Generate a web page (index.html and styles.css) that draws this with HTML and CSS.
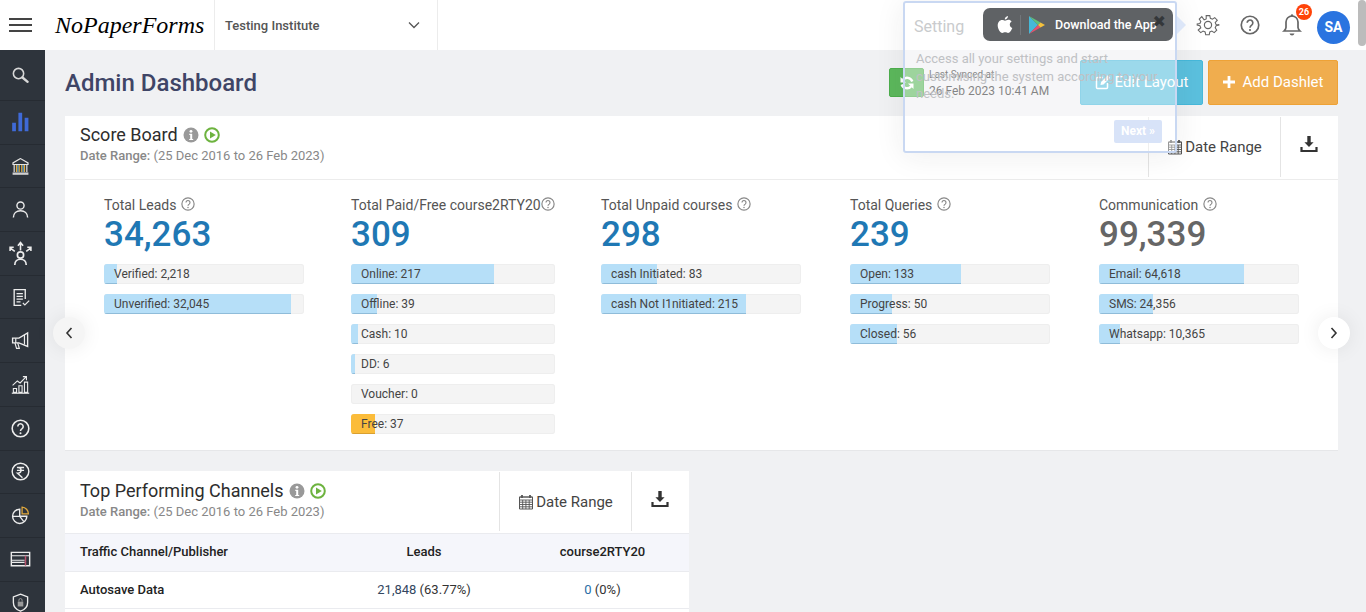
FILE: index.html
```html
<!DOCTYPE html>
<html lang="en">
<head>
    <meta charset="UTF-8">
    <meta name="viewport" content="width=device-width, initial-scale=1.0">
    <title>Admin Dashboard</title>
    <link rel="stylesheet" href="styles.css">
</head>
<body>

<svg class="sprites" width="0" height="0">
    <symbol id="i-help" viewBox="0 0 24 24">
        <circle cx="12" cy="12" r="10.5" fill="none" stroke="currentColor" stroke-width="2"/>
        <path d="M8.6 9.4a3.4 3.4 0 1 1 5.4 2.8c-1.3.9-2 1.5-2 3" fill="none" stroke="currentColor" stroke-width="2"/>
        <circle cx="12" cy="18" r="1.3" fill="currentColor"/>
    </symbol>
    <symbol id="i-info" viewBox="0 0 16 16">
        <circle cx="8" cy="8" r="7.5" fill="#999"/>
        <circle cx="8" cy="4.3" r="1.4" fill="#fff"/>
        <path d="M6.3 6.700h2.900v5.200h1v1.200H6.200v-1.200h1v-4h-.9z" fill="#fff"/>
    </symbol>
    <symbol id="i-play" viewBox="0 0 16 16">
        <circle cx="8" cy="8" r="6.800" fill="none" stroke="#6db33f" stroke-width="2"/>
        <path d="M6 4.400L11.800 8 6 11.600z" fill="#6db33f"/>
    </symbol>
    <symbol id="i-calendar" viewBox="0 0 16 16">
        <path d="M1.500 3h13v12h-13z" fill="none" stroke="#555" stroke-width="1"/>
        <path d="M1.500 3h13v3h-13zM1.500 8.200h13M1.500 10.500h13M1.500 12.800h13M4.700 6v9M7.900 6v9M11.200 6v9" fill="none" stroke="#555" stroke-width=".9"/>
        <path d="M4 1v3M12 1v3" stroke="#555" stroke-width="1.800"/>
    </symbol>
    <symbol id="i-download" viewBox="0 0 18 18">
        <path d="M7.300 1h3.400v6.200h2.900L9 12 4.400 7.200h2.900z" fill="#333"/>
        <path d="M1.500 12v4h15v-4" fill="none" stroke="#333" stroke-width="2.200"/>
    </symbol>
</svg>

<header class="topbar">
    <a class="burger"><span></span><span></span><span></span></a>
    <div class="logo">NoPaperForms</div>
    <div class="institute">
        <span>Testing Institute</span>
        <svg width="12" height="8" viewBox="0 0 12 8"><path d="M1 1.500l5 5 5-5" fill="none" stroke="#555" stroke-width="1.300"/></svg>
    </div>
    <div class="top-icons">
        <svg class="top-icon" viewBox="0 0 24 24"><path d="M10 2h4l.6 3 2.300 1 2.600-1.700 2.800 2.800L20 9.700l1 2.300 3 .6v-1.200 1.200l-3 .6-1 2.300 1.700 2.600-2.800 2.800-2.600-1.700-2.300 1-.6 3h-4l-.6-3-2.300-1-2.600 1.700-2.800-2.800L4 15.500 3 13.200 0 12.600v-1.200l3-.6 1-2.300-1.700-2.600 2.800-2.800L7.700 6.800 10 5.800z" fill="none" stroke="#666" stroke-width="1.200" transform="translate(1.200 .8) scale(.9)"/><circle cx="12" cy="12" r="3.600" fill="none" stroke="#666" stroke-width="1.200"/></svg>
        <svg class="top-icon help"><use href="#i-help"/></svg>
        <div class="bell">
            <svg class="top-icon" viewBox="0 0 24 24"><path d="M12 3a6 6 0 0 0-6 6v5.500c0 1.500-1 2.500-2 3.500h16c-1-1-2-2-2-3.500V9a6 6 0 0 0-6-6z" fill="none" stroke="#666" stroke-width="1.700"/><path d="M9.500 20.500a2.600 2.600 0 0 0 5 0z" fill="#666"/><circle cx="12" cy="2.500" r="1.200" fill="#666"/></svg>
            <span class="badge">26</span>
        </div>
        <div class="avatar">SA</div>
    </div>
</header>

<div class="layout">
    <nav class="sidebar">
        <a class="side-item first"><svg viewBox="0 0 24 24"><circle cx="9.500" cy="9.500" r="6.500" fill="none" stroke="#d8d8d8" stroke-width="2"/><path d="M14.500 14.500l6.500 5.500" stroke="#d8d8d8" stroke-width="3" stroke-linecap="round"/></svg></a>
        <a class="side-item"><svg class="lg" viewBox="0 0 24 24"><path d="M2 13h4.500v10H2zM9.500 1h4.500v22H9.500zM17 7h4.500v16H17z" fill="#3f6ad8"/></svg></a>
        <a class="side-item"><svg viewBox="0 0 24 24"><path d="M12 2L2.500 7.500v2h19v-2z" fill="none" stroke="#e4e4e4" stroke-width="1.500"/><path d="M4 19V10M20 19V10" stroke="#e4e4e4" stroke-width="1.500"/><path d="M7 10v9M10.300 10v9M13.600 10v9M17 10v9" stroke="#e2a93c" stroke-width="1.600"/><path d="M8.700 10v9M15.300 10v9" stroke="#58a6dc" stroke-width="1.400"/><path d="M2 19.500h20v3H2z" fill="#d0d0d0"/></svg></a>
        <a class="side-item"><svg viewBox="0 0 24 24"><circle cx="12" cy="7" r="4.500" fill="none" stroke="#ececec" stroke-width="1.800"/><path d="M3 22c0-5.500 4-8.500 9-8.500s9 3 9 8.500" fill="none" stroke="#ececec" stroke-width="1.800"/></svg></a>
        <a class="side-item"><svg class="xl" viewBox="0 0 24 24"><circle cx="12" cy="13.500" r="3" fill="none" stroke="#ececec" stroke-width="1.600"/><path d="M6.500 23c0-3.500 2.500-5.500 5.500-5.500s5.500 2 5.500 5.500" fill="none" stroke="#ececec" stroke-width="1.600"/><path d="M12 9V2.500M9.500 4.500L12 1.500l2.500 3M6.500 10L2 6.500M2 9.500V6h3.500M17.500 10L22 6.500M22 9.500V6h-3.500" fill="none" stroke="#ececec" stroke-width="1.500"/></svg></a>
        <a class="side-item"><svg viewBox="0 0 24 24"><path d="M18 14V2H4v20h9" fill="none" stroke="#ececec" stroke-width="1.700"/><path d="M7 7h8M7 10.500h8M7 14h8M7 17.500h5" stroke="#ececec" stroke-width="1.500"/><path d="M15 19l2.500 2.500L23 16" fill="none" stroke="#ececec" stroke-width="1.500"/></svg></a>
        <a class="side-item"><svg viewBox="0 0 24 24"><path d="M2 9h8l11-6.500v17L10 15H2z" fill="none" stroke="#ececec" stroke-width="1.700"/><path d="M5 15l2 7h3.500l-2-7M6 9v6M17 5v12" fill="none" stroke="#ececec" stroke-width="1.500"/></svg></a>
        <a class="side-item"><svg viewBox="0 0 24 24"><path d="M1 23h22" stroke="#ececec" stroke-width="1.500"/><path d="M3 17h4v5H3zM10 13.500h4V22h-4zM17 9h4v13h-4z" fill="none" stroke="#ececec" stroke-width="1.400"/><path d="M2 13L8 7.500l3.500 2.500L19 2.500M15 2h4.500v4.500" fill="none" stroke="#ececec" stroke-width="1.400"/></svg></a>
        <a class="side-item"><svg viewBox="0 0 24 24"><use href="#i-help" class="side-use"/></svg></a>
        <a class="side-item"><svg viewBox="0 0 24 24"><circle cx="12" cy="12" r="10.500" fill="none" stroke="#ececec" stroke-width="1.800"/><path d="M7.500 7h9M7.500 10.500h9M9 7c5 0 5 7 0 7H8l6.500 6" fill="none" stroke="#ececec" stroke-width="1.700"/></svg></a>
        <a class="side-item"><svg viewBox="0 0 24 24"><path d="M11 4a9 9 0 1 0 9 9h-9z" fill="none" stroke="#ececec" stroke-width="1.800"/><path d="M14 1.500a8.500 8.500 0 0 1 8 8.500h-8z" fill="none" stroke="#e2a93c" stroke-width="1.600"/><path d="M2 13h9l5 6.500" fill="none" stroke="#ececec" stroke-width="1.600"/></svg></a>
        <a class="side-item"><svg class="lg" viewBox="0 0 24 24"><path d="M1 4h22v16H1z" fill="none" stroke="#ececec" stroke-width="1.700"/><path d="M1 8h22M1 13.500h16M1 16h16" stroke="#ececec" stroke-width="1.300"/><path d="M18 8v12" stroke="#b7526c" stroke-width="1.800"/></svg></a>
        <a class="side-item"><svg viewBox="0 0 24 24"><path d="M12 1.500l9 3.500v7c0 5-3.500 9-9 11-5.500-2-9-6-9-11V5z" fill="none" stroke="#ececec" stroke-width="1.700"/><path d="M8.500 11h7v6h-7z" fill="#9a9a9a"/><path d="M10 11V9a2 2 0 0 1 4 0v2" fill="none" stroke="#9a9a9a" stroke-width="1.200"/></svg></a>
    </nav>

    <main class="content">
        <div class="page-head">
            <h1>Admin Dashboard</h1>
            <div class="head-actions">
                <div class="sync-btn"><svg width="16" height="16" viewBox="0 0 16 16"><path d="M13.300 6.500A5.500 5.500 0 0 0 3.800 4.800M2.700 9.500A5.500 5.500 0 0 0 12.200 11.200" fill="none" stroke="#fff" stroke-width="2.400"/><path d="M1.500 2v5.500H7zM14.500 14V8.500H9z" fill="#fff"/></svg></div>
                <div class="sync-text">
                    <span class="sync-label">Last Synced at</span>
                    <span class="sync-date">26 Feb 2023 10:41 AM</span>
                </div>
                <button class="btn btn-edit"><svg width="16" height="16" viewBox="0 0 16 16"><path d="M12.500 9v4.500a1 1 0 0 1-1 1h-9a1 1 0 0 1-1-1v-9a1 1 0 0 1 1-1H8" fill="none" stroke="#fff" stroke-width="1.500"/><path d="M5.500 11l.6-3L12.800 1.300l2.400 2.400L8.500 10.400z" fill="#fff"/></svg>Edit Layout</button>
                <button class="btn btn-add"><svg width="12" height="12" viewBox="0 0 13 13"><path d="M5 0h3v5h5v3H8v5H5V8H0V5h5z" fill="#fff"/></svg>Add Dashlet</button>
            </div>
        </div>

        <section class="card">
            <div class="card-head">
                <div class="card-title">
                    <h2>Score Board <svg class="ico"><use href="#i-info"/></svg> <svg class="ico"><use href="#i-play"/></svg></h2>
                    <p class="range"><b>Date Range:</b> (25 Dec 2016 to 26 Feb 2023)</p>
                </div>
                <div class="head-cell date-cell"><svg class="cal"><use href="#i-calendar"/></svg>Date Range</div>
                <div class="head-cell dl-cell"><svg class="dl"><use href="#i-download"/></svg></div>
            </div>

            <div class="stats">
                <div class="stat">
                    <div class="stat-name">Total Leads <svg class="q"><use href="#i-help"/></svg></div>
                    <div class="stat-num">34,263</div>
                    <div class="bar"><i style="width:6.5%"></i><span>Verified: 2,218</span></div>
                    <div class="bar"><i style="width:93.5%"></i><span>Unverified: 32,045</span></div>
                </div>
                <div class="stat wide">
                    <div class="stat-name tight">Total Paid/Free course2RTY20<svg class="q"><use href="#i-help"/></svg></div>
                    <div class="stat-num">309</div>
                    <div class="bar"><i style="width:70%"></i><span>Online: 217</span></div>
                    <div class="bar"><i style="width:12.6%"></i><span>Offline: 39</span></div>
                    <div class="bar"><i style="width:3.2%"></i><span>Cash: 10</span></div>
                    <div class="bar"><i style="width:1.9%"></i><span>DD: 6</span></div>
                    <div class="bar"><i style="width:0"></i><span>Voucher: 0</span></div>
                    <div class="bar"><i class="free" style="width:11.9%"></i><span>Free: 37</span></div>
                </div>
                <div class="stat">
                    <div class="stat-name">Total Unpaid courses <svg class="q"><use href="#i-help"/></svg></div>
                    <div class="stat-num">298</div>
                    <div class="bar"><i style="width:27.9%"></i><span>cash Initiated: 83</span></div>
                    <div class="bar"><i style="width:72.5%"></i><span>cash Not I1nitiated: 215</span></div>
                </div>
                <div class="stat">
                    <div class="stat-name">Total Queries <svg class="q"><use href="#i-help"/></svg></div>
                    <div class="stat-num">239</div>
                    <div class="bar"><i style="width:55.6%"></i><span>Open: 133</span></div>
                    <div class="bar"><i style="width:20.9%"></i><span>Progress: 50</span></div>
                    <div class="bar"><i style="width:23.4%"></i><span>Closed: 56</span></div>
                </div>
                <div class="stat">
                    <div class="stat-name">Communication <svg class="q"><use href="#i-help"/></svg></div>
                    <div class="stat-num grey">99,339</div>
                    <div class="bar"><i style="width:72.5%"></i><span>Email: 64,618</span></div>
                    <div class="bar"><i style="width:27%"></i><span>SMS: 24,356</span></div>
                    <div class="bar"><i style="width:10.5%"></i><span>Whatsapp: 10,365</span></div>
                </div>
            </div>
            <a class="arrow arrow-left"><svg width="8" height="12" viewBox="0 0 8 12"><path d="M6.500 1L2 6l4.500 5" fill="none" stroke="#333" stroke-width="1.600"/></svg></a>
            <a class="arrow arrow-right"><svg width="8" height="12" viewBox="0 0 8 12"><path d="M1.500 1L6 6l-4.500 5" fill="none" stroke="#333" stroke-width="1.600"/></svg></a>
        </section>

        <section class="card channels">
            <div class="card-head">
                <div class="card-title">
                    <h2>Top Performing Channels <svg class="ico"><use href="#i-info"/></svg> <svg class="ico"><use href="#i-play"/></svg></h2>
                    <p class="range"><b>Date Range:</b> (25 Dec 2016 to 26 Feb 2023)</p>
                </div>
                <div class="head-cell date-cell"><svg class="cal"><use href="#i-calendar"/></svg>Date Range</div>
                <div class="head-cell dl-cell"><svg class="dl"><use href="#i-download"/></svg></div>
            </div>
            <table>
                <tr>
                    <th>Traffic Channel/Publisher</th>
                    <th>Leads</th>
                    <th>course2RTY20</th>
                </tr>
                <tr>
                    <td>Autosave Data</td>
                    <td><a class="num">21,848</a> (63.77%)</td>
                    <td><a class="num zero">0</a> (0%)</td>
                </tr>
                <tr>
                    <td>&nbsp;</td>
                    <td></td>
                    <td></td>
                </tr>
            </table>
        </section>
    </main>
</div>

<div class="tour">
    <h3>Setting</h3>
    <p>Access all your settings and start customising the system according to your needs.</p>
    <a class="tour-next">Next »</a>
</div>
<div class="app-pill">
    <svg class="apple" width="16" height="18" viewBox="0 0 16 18"><path d="M11 0c.1 1.500-1.300 3.600-3.200 3.500C7.600 2 9.200.2 11 0zM8 4.700c.8 0 1.900-.9 3.400-.9 1.200 0 2.400.6 3.200 1.700-2.700 1.600-2.200 5.400.7 6.500-.7 1.900-2.500 5-4.200 5-1.100 0-1.600-.7-2.900-.7s-1.900.7-2.900.7C3.200 17 .7 12.800.7 9.500c0-3.400 2.200-5.500 4.300-5.500 1.300 0 2.300.7 3 .7z" fill="#fff"/></svg>
    <span class="pill-sep"></span>
    <svg class="gplay" width="16" height="18" viewBox="0 0 16 18"><path d="M0 0l9 9-9 9z" fill="#45b8d8"/><path d="M0 0l11.500 6.500L9 9z" fill="#5fc07a"/><path d="M0 18l11.500-6.500L9 9z" fill="#e8506b"/><path d="M11.500 6.500L16 9l-4.500 2.500L9 9z" fill="#f5c13c"/></svg>
    <span class="pill-text">Download the App</span>
    <span class="tour-close">✖</span>
</div>
<div class="scroll-thumb"></div>

</body>
</html>
```

FILE: styles.css
```css
* {
    box-sizing: border-box;
}

html, body {
    height: 100%;
    margin: 0;
    overflow: hidden;
}

body {
    font-family: Roboto, Arial, sans-serif;
    background-color: #f0f1f3;
    color: #333;
}

.sprites {
    display: block;
}

/* top bar */
.topbar {
    display: flex;
    align-items: stretch;
    height: 50px;
    background-color: #fff;
}

.burger {
    display: flex;
    flex-direction: column;
    justify-content: center;
    gap: 4px;
    width: 55px;
    padding-left: 9px;
}

.burger span {
    display: block;
    width: 23px;
    height: 2px;
    background-color: #444;
}

.logo {
    width: 159px;
    font-family: "Liberation Serif", serif;
    font-style: italic;
    font-size: 24px;
    line-height: 50px;
    color: #000;
    white-space: nowrap;
}

.institute {
    display: flex;
    align-items: center;
    justify-content: space-between;
    width: 224px;
    padding: 0 17px 0 10px;
    border-left: 1px solid #ececec;
    border-right: 1px solid #ececec;
    font-size: 13px;
    font-weight: 500;
    color: #555;
}

.top-icons {
    display: flex;
    align-items: center;
    margin-left: auto;
    padding-right: 16px;
    gap: 18px;
}

.top-icon {
    display: block;
    width: 24px;
    height: 24px;
}

.help {
    width: 20px;
    height: 20px;
    margin: 0 2px;
    color: #666;
}

.bell {
    position: relative;
    margin-right: -5px;
}

.badge {
    position: absolute;
    top: -9px;
    right: -8px;
    width: 16px;
    height: 16px;
    border-radius: 50%;
    background-color: #ff4308;
    color: #fff;
    font-size: 9px;
    font-weight: 700;
    line-height: 16px;
    text-align: center;
}

.avatar {
    width: 33px;
    height: 33px;
    margin-top: 4px;
    border-radius: 50%;
    background-color: #2a74e0;
    color: #fff;
    font-size: 14px;
    font-weight: 700;
    line-height: 33px;
    text-align: center;
}

/* sidebar */
.layout {
    display: flex;
    height: 562px;
}

.sidebar {
    flex: 0 0 45px;
    background-color: #2e343c;
}

.side-item {
    display: flex;
    align-items: center;
    justify-content: center;
    height: 43.7px;
    padding-right: 4px;
    border-bottom: 1px solid #262b32;
}

.side-item.first {
    height: 51px;
}

.side-item svg {
    width: 19px;
    height: 19px;
}

.side-item svg.lg {
    width: 21px;
    height: 20px;
}

.side-item svg.xl {
    width: 25px;
    height: 25px;
}

.side-use {
    color: #ececec;
}

/* main area */
.content {
    flex: 1;
    padding: 0 28px 0 20px;
}

.page-head {
    display: flex;
    justify-content: space-between;
    height: 66px;
}

.page-head h1 {
    margin: 0;
    font-size: 24px;
    font-weight: 500;
    line-height: 66px;
    color: #3f4566;
}

.head-actions {
    display: flex;
    align-items: center;
    height: 45px;
    margin-top: 10px;
}

.sync-btn {
    display: flex;
    align-items: center;
    justify-content: center;
    width: 35px;
    height: 29px;
    border: 1px solid #4cae4c;
    border-radius: 2px;
    background-color: #5cb85c;
}

.sync-text {
    display: flex;
    flex-direction: column;
    width: 151px;
    margin: 3px 0 0 5px;
    color: #333;
}

.sync-label {
    font-size: 10px;
    line-height: 14px;
}

.sync-date {
    font-size: 12px;
    line-height: 18px;
}

.btn {
    display: flex;
    align-items: center;
    justify-content: center;
    gap: 4px;
    height: 45px;
    padding: 0 0 2px;
    border-radius: 2px;
    color: #fff;
    font-family: inherit;
    font-size: 15px;
}

.btn-edit {
    width: 123px;
    margin-right: 5px;
    border: 1px solid #46b8da;
    background-color: #5bc0de;
}

.btn-add {
    gap: 8px;
    width: 130px;
    border: 1px solid #eea236;
    background-color: #f0ad4e;
}

/* cards */
.card {
    position: relative;
    background-color: #fff;
    border-bottom: 1px solid #e6e7e9;
}

.card-head {
    display: flex;
    height: 64px;
    border-bottom: 1px solid #ececec;
}

.card-title {
    flex: 1;
    padding: 9px 0 0 15px;
}

.card-title h2 {
    display: flex;
    align-items: center;
    gap: 5px;
    margin: 0;
    font-size: 18px;
    font-weight: 400;
    line-height: 20px;
    color: #2d2d2d;
}

.ico {
    width: 16px;
    height: 16px;
}

.range {
    margin: 4px 0 0;
    font-size: 13px;
    line-height: 14px;
    color: #888;
}

.range b {
    font-weight: 500;
}

.head-cell {
    display: flex;
    align-items: center;
    justify-content: center;
    margin: 1px 0 2px;
    border-left: 1px solid #e4e4e4;
    font-size: 15px;
    color: #444;
}

.date-cell {
    width: 132px;
}

.dl-cell {
    width: 58px;
    padding-right: 1px;
}

.cal {
    width: 16px;
    height: 16px;
    margin-right: 2px;
}

.dl {
    width: 18px;
    height: 18px;
    margin-bottom: 6px;
}

/* score board columns */
.stats {
    display: grid;
    grid-template-columns: 247px 250px 249px 249px 200px;
    height: 270px;
    padding: 16px 0 0 39px;
}

.stat {
    width: 200px;
}

.stat.wide {
    width: 204px;
}

.stat-name {
    display: flex;
    align-items: center;
    gap: 5px;
    font-size: 14px;
    line-height: 18px;
    color: #555;
    white-space: nowrap;
}

.stat-name.tight {
    gap: 0;
}

.q {
    width: 14px;
    height: 14px;
    color: #888;
    margin-top: -2px;
}

.stat-num {
    margin-bottom: 8px;
    font-size: 35px;
    font-weight: 500;
    line-height: 42px;
    color: #1f78b4;
}

.stat-num.grey {
    color: #666;
}

.bar {
    display: grid;
    height: 20px;
    margin-bottom: 10px;
    border-radius: 3px;
    background-color: #f4f4f4;
    overflow: hidden;
    box-shadow: inset 0 0 0 1px #eeeeee;
}

.bar i, .bar span {
    grid-area: 1 / 1;
}

.bar i {
    background-color: #b6dff8;
    border-bottom: 1px solid #8fbcd9;
}

.bar i.free {
    background-color: #fbbc3a;
    border-bottom-color: #d9a030;
}

.bar span {
    padding-left: 10px;
    font-size: 12px;
    line-height: 20px;
    color: #444;
    white-space: nowrap;
}

/* carousel arrows sit over the card edge */
.arrow {
    position: absolute;
    top: 201px;
    display: flex;
    align-items: center;
    justify-content: center;
    width: 32px;
    height: 32px;
    border-radius: 50%;
    box-shadow: 0 0 20px rgba(0, 0, 0, .08);
}

.arrow-left {
    left: -12px;
    background-color: #f5f5f5;
}

.arrow-right {
    right: -12px;
    background-color: #fff;
}

/* channels table */
.channels {
    width: 624px;
    margin-top: 20px;
    border-bottom: 0;
}

.channels .card-head {
    height: 62px;
    border-bottom: 0;
}

.channels .card-title {
    padding-top: 10px;
}

.channels .date-cell {
    flex: 0 0 132px;
}

.channels .dl-cell {
    flex: 0 0 58px;
}

table {
    width: 100%;
    table-layout: fixed;
    border-collapse: collapse;
    font-size: 13px;
}

th, td {
    height: 37px;
    padding: 0 0 2px;
    border-top: 1px solid #eaebef;
    text-align: center;
    font-weight: 400;
    color: #333;
}

th {
    height: 38px;
    background-color: #f5f6fb;
    font-weight: 500;
    color: #222;
}

th:first-child, td:first-child {
    width: 267px;
    padding-left: 15px;
    text-align: left;
    font-weight: 500;
    color: #222;
}

th:nth-child(2) {
    width: 184px;
}

.num {
    color: #33475f;
}

.num.zero {
    color: #2a6ea6;
}

/* guided tour popup */
.tour {
    position: absolute;
    top: 1px;
    left: 903px;
    width: 274px;
    height: 152px;
    padding: 14px 9px;
    border: 2px solid #c9d8f2;
    border-radius: 3px;
    background-color: rgba(255, 255, 255, .4);
    box-shadow: 0 3px 30px rgba(33, 33, 33, .08);
    color: #bfc1c4;
}

.tour::after {
    content: "";
    position: absolute;
    top: 13px;
    right: -11px;
    border-top: 9px solid transparent;
    border-bottom: 9px solid transparent;
    border-left: 9px solid #dce6f8;
}

.tour h3 {
    margin: 0;
    font-size: 16px;
    font-weight: 400;
    line-height: 20px;
    color: #c9cbcd;
}

.tour p {
    margin: 13px 0 0 2px;
    font-size: 13px;
    line-height: 17.5px;
}

.tour-next {
    position: absolute;
    top: 117px;
    right: 13px;
    width: 48px;
    height: 23px;
    border-radius: 2px;
    background-color: #d8e3f8;
    color: #fff;
    font-size: 12px;
    font-weight: 700;
    line-height: 23px;
    text-align: center;
}

.app-pill {
    position: absolute;
    top: 8px;
    left: 983px;
    display: flex;
    align-items: center;
    width: 190px;
    height: 33px;
    padding-left: 14px;
    border-radius: 7px;
    background-color: #5f6265;
}

.pill-sep {
    width: 1px;
    height: 20px;
    margin: 0 8px 0 7px;
    background-color: #72767a;
}

.pill-text {
    margin-left: 10px;
    color: #fff;
    font-size: 12.5px;
    font-weight: 500;
    white-space: nowrap;
}

.tour-close {
    position: absolute;
    top: 5px;
    right: 7px;
    color: #34373a;
    font-family: "DejaVu Sans", sans-serif;
    font-size: 16px;
    line-height: 18px;
}

.scroll-thumb {
    position: fixed;
    top: 0;
    right: 0;
    width: 8px;
    height: 46px;
    border-radius: 4px;
    background-color: #bcbcbc;
}
```
